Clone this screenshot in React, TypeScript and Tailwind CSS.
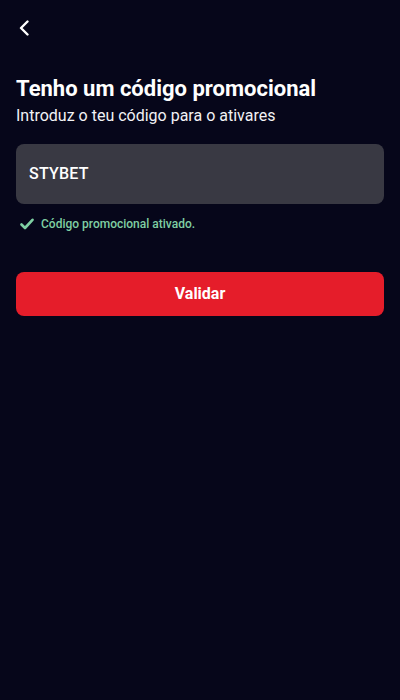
export default function App() {
  return (
    <div
      className="min-h-[700px] w-full bg-[#06061a] px-4 text-white"
      style={{ fontFamily: 'Roboto, "Noto Sans", sans-serif' }}
    >
      {/* topo */}
      <div className="flex h-[56px] items-center">
        <button className="flex h-8 w-8 items-center justify-start pl-[3px] text-white">
          <svg width="11" height="16" viewBox="0 0 11 16" fill="none">
            <path d="M8.5 1.5 L2 8 L8.5 14.5" stroke="white" strokeWidth="2.4" strokeLinecap="round" strokeLinejoin="round" />
          </svg>
        </button>
      </div>

      <h1 className="mt-[19px] text-[22px] font-bold leading-[28px]">Tenho um código promocional</h1>
      <p className="mt-[2px] text-[16px] leading-[22px] text-[#f2f2f5]">Introduz o teu código para o ativares</p>

      <div className="mt-[17px] flex h-[60px] items-center rounded-lg bg-[#393943] px-[13px]">
        <span className="text-[16px] font-medium tracking-[0.2px]">STYBET</span>
      </div>

      <div className="mt-[11px] flex items-center gap-[7px] pl-[4px]">
        <svg width="14" height="12" viewBox="0 0 14 12" fill="none">
          <path d="M1.5 6.5 L5 10 L12.5 1.8" stroke="#7fcfa3" strokeWidth="2.6" strokeLinecap="round" strokeLinejoin="round" />
        </svg>
        <span className="text-[12px] font-medium text-[#7fcfa3]">Código promocional ativado.</span>
      </div>

      <button className="mt-[39px] flex h-[44px] w-full items-center justify-center rounded-lg bg-[#e51d2a] text-[16px] font-bold text-white">
        Validar
      </button>
    </div>
  )
}
